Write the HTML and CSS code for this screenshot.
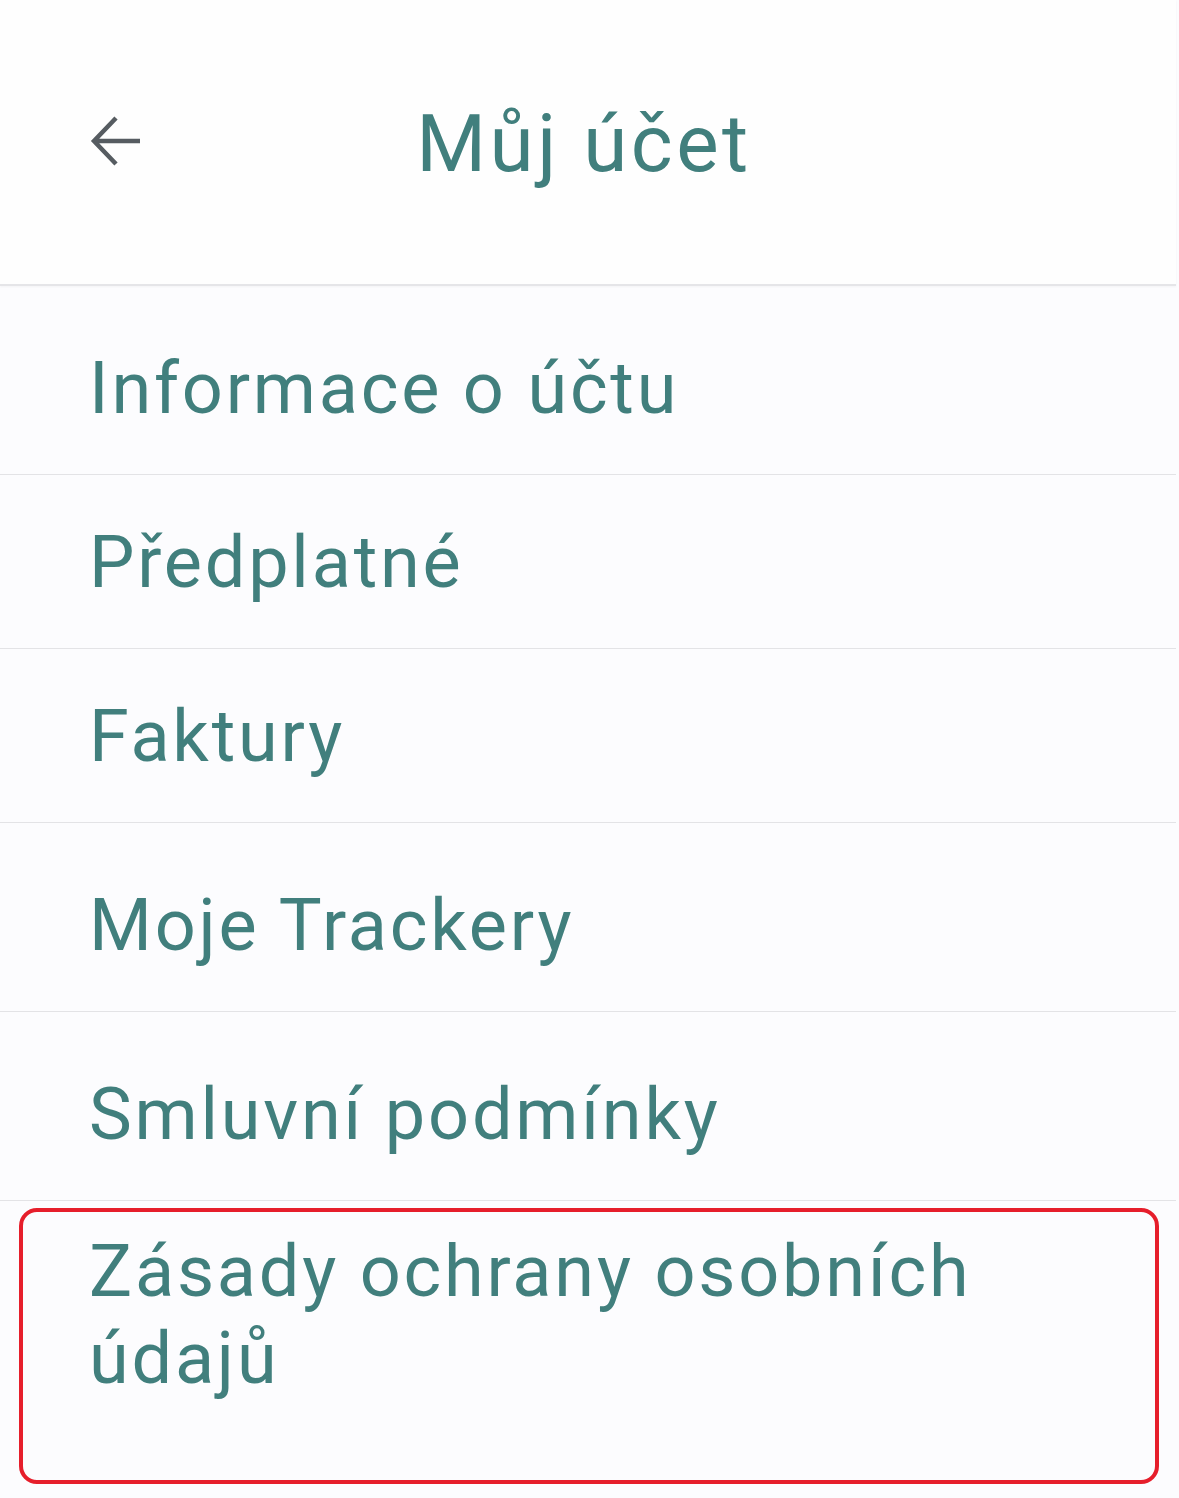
FILE: index.html
```html
<!DOCTYPE html>
<html lang="cs">

<head>
    <meta charset="UTF-8">
    <meta name="viewport" content="width=device-width, initial-scale=1.0">
    <title>Můj účet</title>
    <link rel="stylesheet" href="styles.css">
</head>

<body>
    <div class="screen">
        <header class="topbar">
            <div class="back">
                <svg width="52" height="50" viewBox="0 0 52 50">
                    <path d="M26 2 L4 25 L26 48 M4 25 H50" fill="none" stroke="#565c61" stroke-width="4.5" />
                </svg>
            </div>
            <h1>Můj účet</h1>
            <div class="spacer"></div>
        </header>

        <ul class="menu">
            <li class="item tall">Informace o účtu</li>
            <li class="item">Předplatné</li>
            <li class="item">Faktury</li>
            <li class="item tall">Moje Trackery</li>
            <li class="item tall">Smluvní podmínky</li>
            <li class="item selected">Zásady ochrany osobních údajů</li>
        </ul>
    </div>
</body>

</html>
```

FILE: styles.css
```css
* {
    margin: 0;
    padding: 0;
    box-sizing: border-box;
}

body {
    background-color: #fcfcfe;
    font-family: Roboto, "Noto Sans", sans-serif;
    color: #417f7d;
}

.screen {
    width: 1176px;
    min-height: 1498px;
}

.topbar {
    display: flex;
    align-items: center;
    height: 286px;
    padding-top: 4px;
    background-color: #fefefe;
    border-bottom: 2px solid #e5e5e8;
    box-shadow: 0 1px 2px rgba(0, 0, 0, 0.04);
}

.back,
.spacer {
    width: 260px;
    display: flex;
    padding-left: 90px;
    margin-bottom: 6px;
}

.topbar h1 {
    flex: 1;
    text-align: center;
    font-size: 80px;
    font-weight: 400;
    letter-spacing: 3.5px;
    margin-right: 8px;
}

.menu {
    list-style: none;
}

.item {
    font-size: 72px;
    line-height: 85px;
    padding: 45px 20px 43px 89px;
    border-bottom: 1px solid #e3e3e6;
    letter-spacing: 2.8px;
}

.item.tall {
    padding-top: 60px;
}

.item.selected {
    margin: 7px 0 0 19px;
    width: 1140px;
    height: 276px;
    padding: 16px 40px 0 66px;
    line-height: 87px;
    border: 4px solid #e61e2b;
    border-radius: 18px;
}
```
